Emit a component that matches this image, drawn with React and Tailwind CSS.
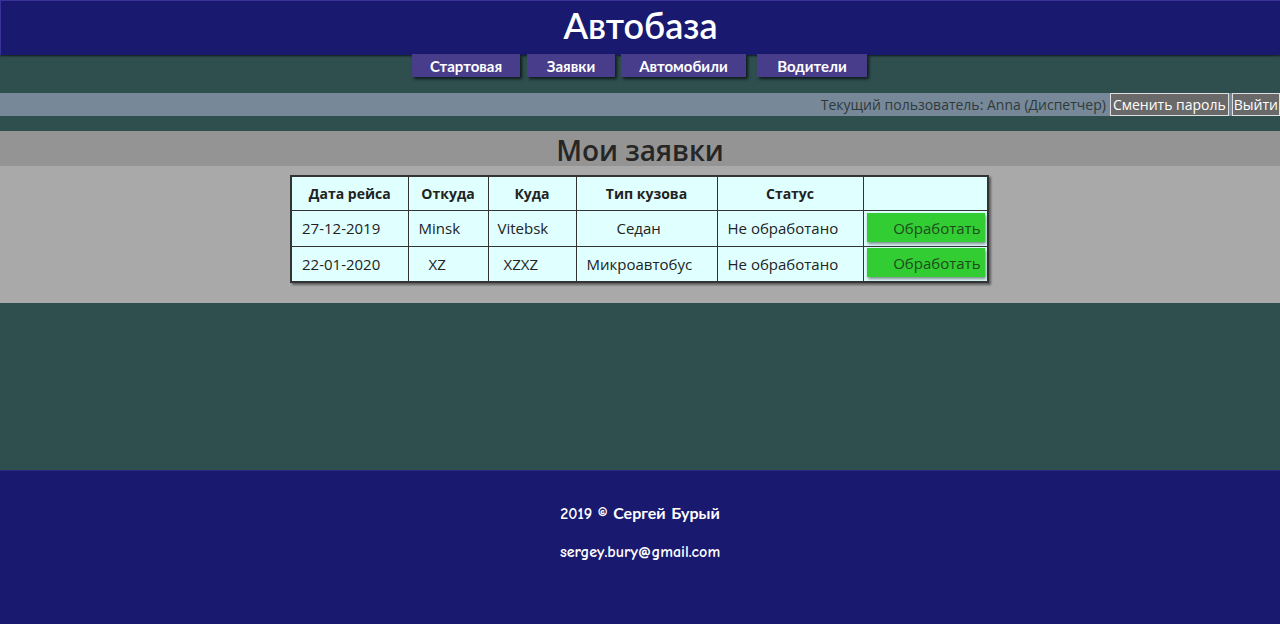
export default function App() {
  const comic = { fontFamily: '"Comic Sans MS", "Comic Neue", "Lato", sans-serif' };
  const rows = [
    ["27-12-2019", "Minsk", "Vitebsk", "Седан", "Не обработано"],
    ["22-01-2020", "XZ", "XZXZ", "Микроавтобус", "Не обработано"],
  ];
  const pads = [
    ["pl-[10px]", "pl-[10px]", "pl-[9px]", "pl-[40px]", "pl-[10px]"],
    ["pl-[10px]", "pl-[20px]", "pl-[15px]", "pl-[10px]", "pl-[10px]"],
  ];
  const navs = [
    ["Стартовая", "w-[108px]", ""],
    ["Заявки", "w-[88px]", "ml-[7px]"],
    ["Автомобили", "w-[125px]", "ml-[6px]"],
    ["Водители", "w-[110px]", "ml-[11px]"],
  ];
  const cols = ["w-[117px]", "w-[80px]", "w-[88px]", "w-[141px]", "w-[146px]", "w-[125px]"];
  return (
    <div className="w-[1280px] h-[624px] bg-[#2f4f4f] flex flex-col" style={{ fontFamily: '"Open Sans", "Noto Sans", sans-serif' }}>
      <div className="h-[55px] bg-[#191970] border-t border-l border-[#3a3296] shadow-[0_1px_2px_rgba(0,0,0,0.7)] flex justify-center items-start">
        <div className="text-white text-[36px] leading-[50px] font-semibold mt-[2px]" style={comic}>Автобаза</div>
      </div>
      <div className="flex justify-center -mt-[1px] pr-[1px] relative z-10">
        {navs.map(([t, w, m]) => (
          <div key={t} className={`${w} ${m} h-[23px] pt-[3px] bg-[#483d8b] text-white text-[15px] font-bold flex items-center justify-center shadow-[2px_2px_3px_rgba(0,0,0,0.7)]`} style={comic}>{t}</div>
        ))}
      </div>
      <div className="mt-[16px] h-[23px] bg-[#778899] flex justify-end items-center text-[14px]">
        <span className="text-[#2f3a3a] mr-[4px]">Текущий пользователь: Anna (Диспетчер)</span>
        <button className="h-[23px] px-[2px] bg-[#696969] text-white border border-[#e0e0e0] leading-none">Сменить пароль</button>
        <button className="h-[23px] ml-[3px] px-[1px] bg-[#696969] text-white border border-[#e0e0e0] leading-none whitespace-nowrap">Выйти</button>
      </div>
      <div className="mt-[15px] h-[35px] bg-[#949494] flex justify-center items-center">
        <h1 className="text-[28px] font-semibold text-[#262626] leading-none mt-[3px]">Мои заявки</h1>
      </div>
      <div className="h-[137px] bg-[#a9a9a9] flex justify-center pt-[9px]">
        <div className="h-[109px] ml-[-1px]">
          <table className="border-collapse bg-[#e0ffff] border-2 border-[#333] shadow-[2px_2px_2px_rgba(0,0,0,0.45)] text-[15px] text-[#222]">
            <thead>
              <tr className="h-[34px]">
                {["Дата рейса", "Откуда", "Куда", "Тип кузова", "Статус", ""].map((h, i) => (
                  <th key={i} className={`${cols[i]} border border-[#333] font-bold text-center text-[14px] p-0`}>{h}</th>
                ))}
              </tr>
            </thead>
            <tbody>
              {rows.map((r, ri) => (
                <tr key={ri} className="h-[36px]">
                  {r.map((c, i) => (
                    <td key={i} className={`border border-[#333] p-0 text-left ${pads[ri][i]}`}>{c}</td>
                  ))}
                  <td className="border border-[#333] p-0 align-bottom">
                    <button className="ml-[3px] mb-[4px] w-[118px] h-[29px] bg-[#32cd32] text-[#1e4a1e] text-[15px] text-right pr-[4px] pt-[2px] shadow-[1px_2px_3px_rgba(0,0,0,0.45)]">Обработать</button>
                  </td>
                </tr>
              ))}
            </tbody>
          </table>
        </div>
      </div>
      <div className="flex-1" />
      <div className="h-[154px] bg-[#191970] border-t border-[#2a2a80] flex flex-col items-center text-white font-bold text-[16px]" style={comic}>
        <div className="mt-[32px] leading-[22px]">2019 © Сергей Бурый</div>
        <div className="mt-[16px] leading-[22px]">sergey.bury@gmail.com</div>
      </div>
    </div>
  );
}
